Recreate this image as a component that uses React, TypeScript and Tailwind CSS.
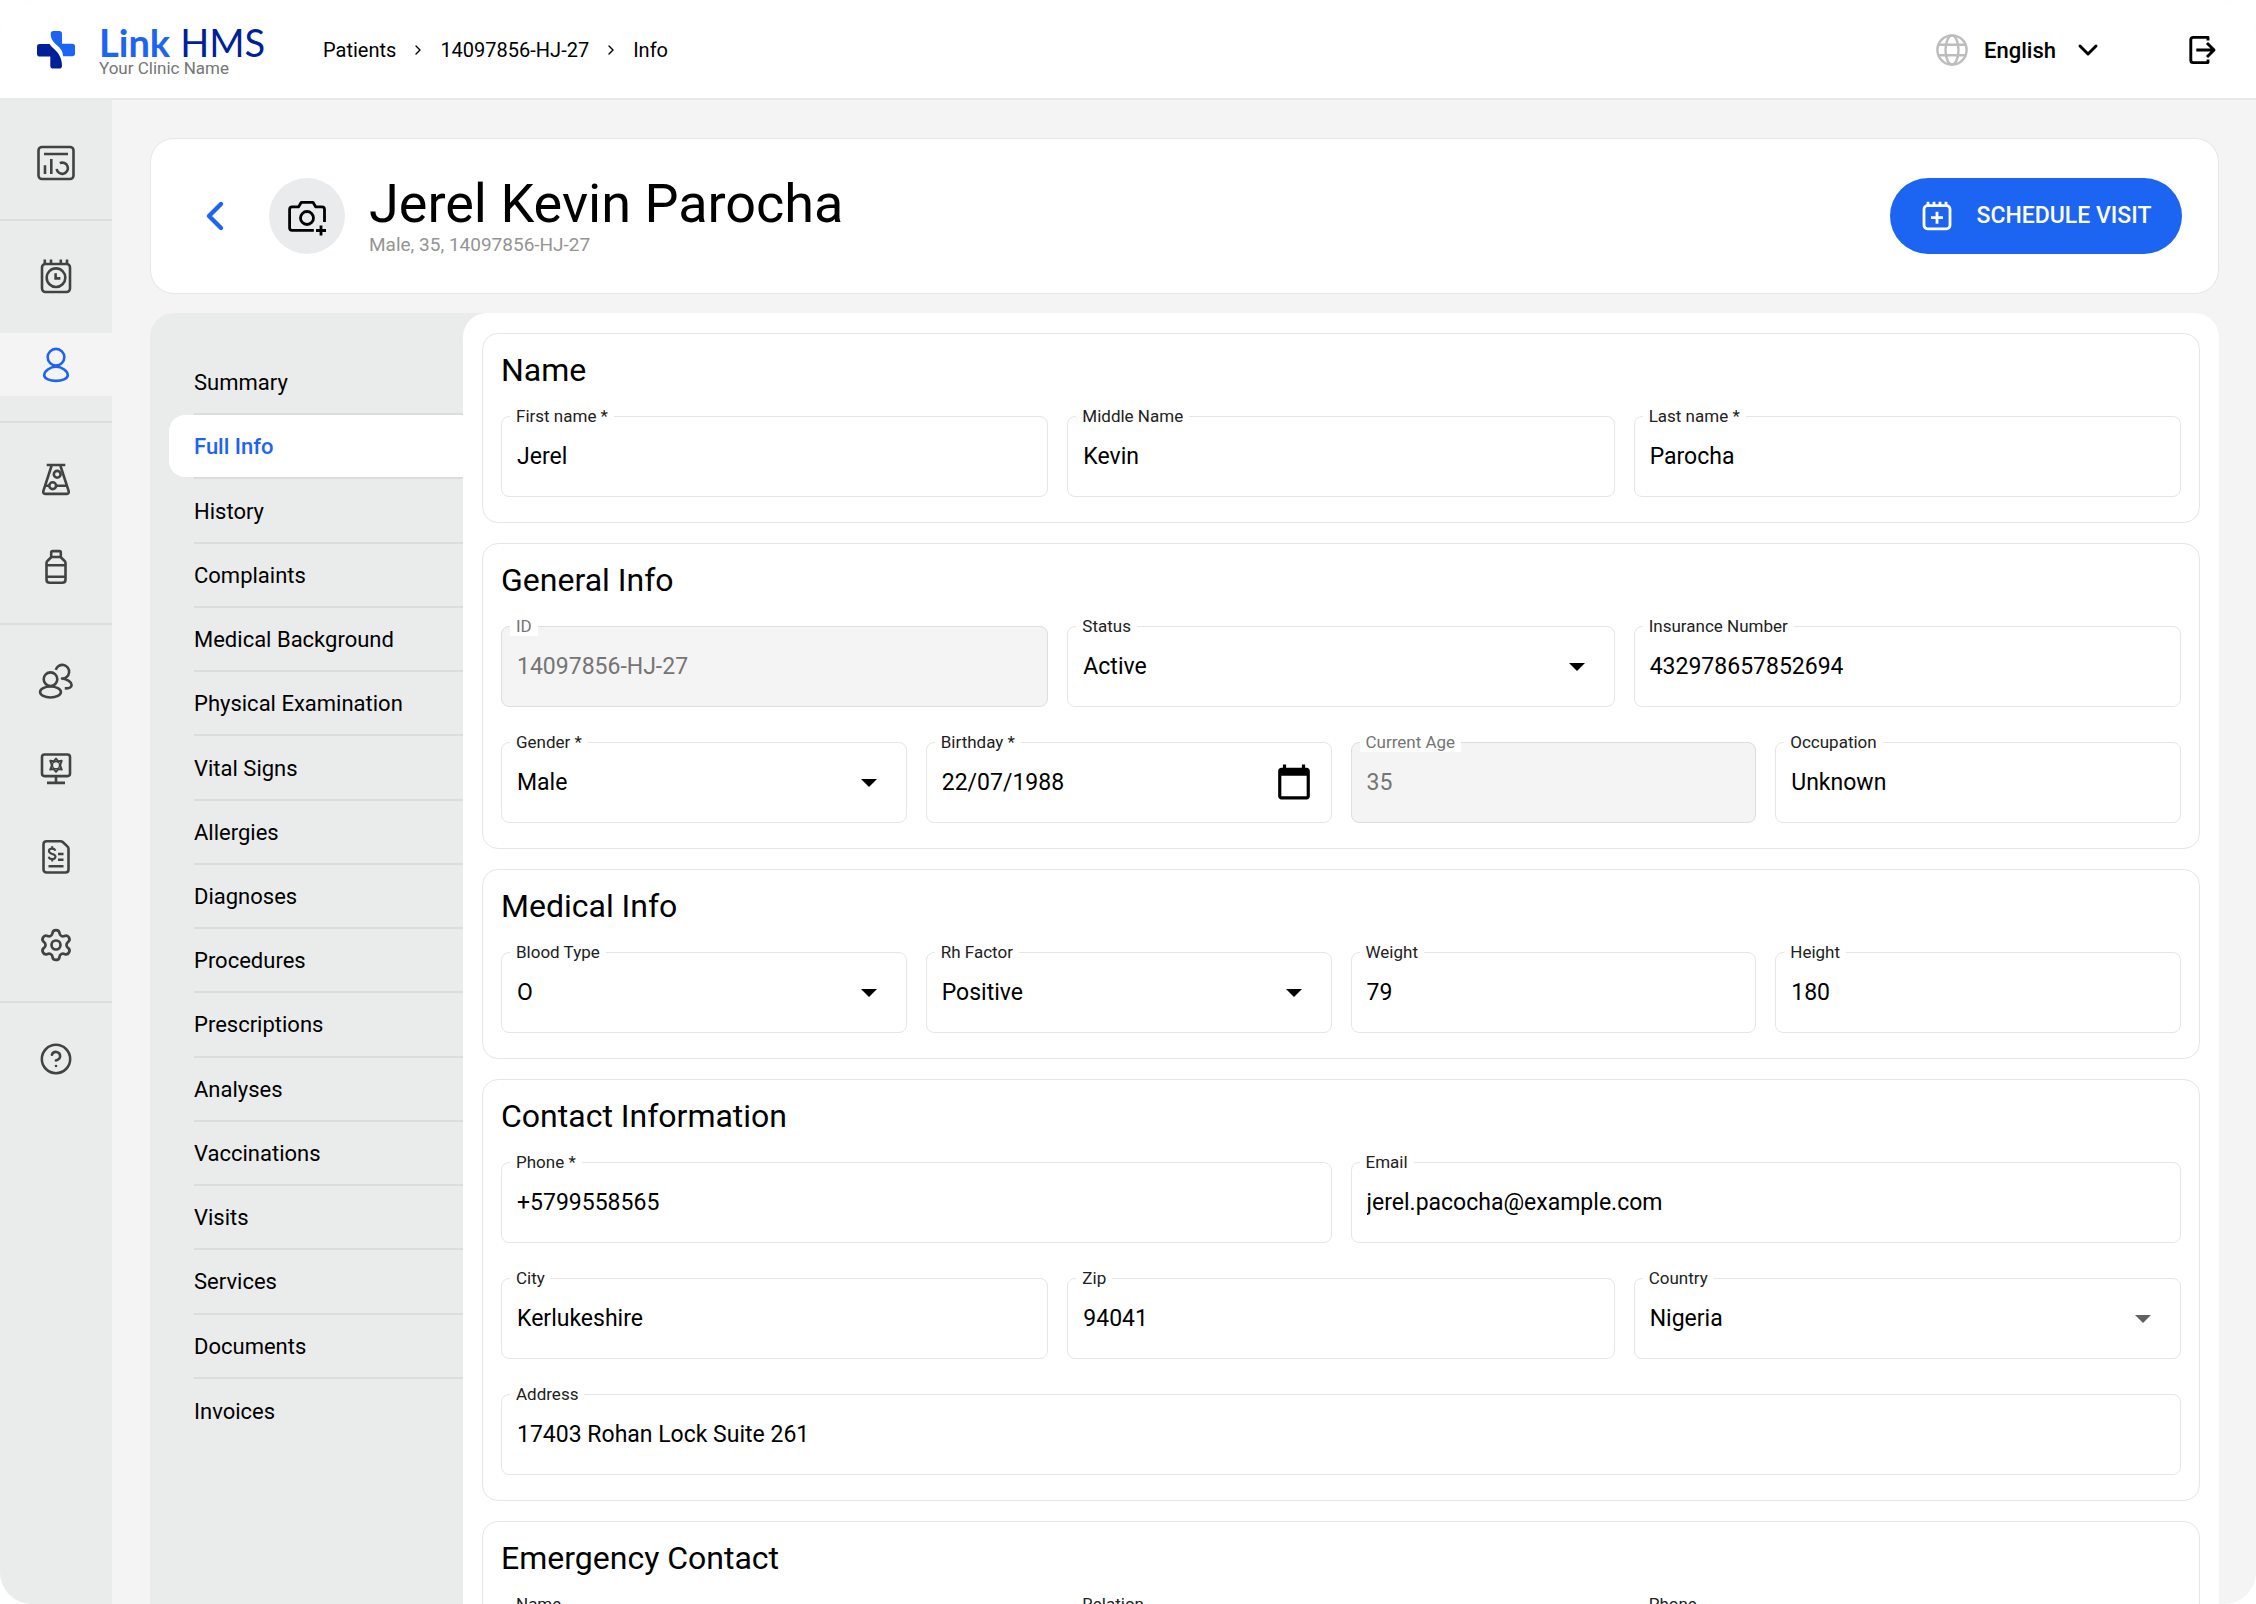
import React, { useId } from 'react';
import { ChevronDown, ChevronLeft, ChevronRight, CircleHelp, Settings } from 'lucide-react';
import { MdCalendarToday } from 'react-icons/md';

interface FieldConfig {
  label: string;
  value: string;
  type?: 'text' | 'select' | 'date';
  disabled?: boolean;
  muted?: boolean;
}

interface SectionConfig {
  title: string;
  rows: FieldConfig[][];
}

const sections: SectionConfig[] = [
  {
    title: 'Name',
    rows: [
      [
        { label: 'First name *', value: 'Jerel' },
        { label: 'Middle Name', value: 'Kevin' },
        { label: 'Last name *', value: 'Parocha' }
      ]
    ]
  },
  {
    title: 'General Info',
    rows: [
      [
        { label: 'ID', value: '14097856-HJ-27', disabled: true },
        { label: 'Status', value: 'Active', type: 'select' },
        { label: 'Insurance Number', value: '432978657852694' }
      ],
      [
        { label: 'Gender *', value: 'Male', type: 'select' },
        { label: 'Birthday *', value: '22/07/1988', type: 'date' },
        { label: 'Current Age', value: '35', disabled: true },
        { label: 'Occupation', value: 'Unknown' }
      ]
    ]
  },
  {
    title: 'Medical Info',
    rows: [
      [
        { label: 'Blood Type', value: 'O', type: 'select' },
        { label: 'Rh Factor', value: 'Positive', type: 'select' },
        { label: 'Weight', value: '79' },
        { label: 'Height', value: '180' }
      ]
    ]
  },
  {
    title: 'Contact Information',
    rows: [
      [
        { label: 'Phone *', value: '+5799558565' },
        { label: 'Email', value: 'jerel.pacocha@example.com' }
      ],
      [
        { label: 'City', value: 'Kerlukeshire' },
        { label: 'Zip', value: '94041' },
        { label: 'Country', value: 'Nigeria', type: 'select', muted: true }
      ],
      [{ label: 'Address', value: '17403 Rohan Lock Suite 261' }]
    ]
  },
  {
    title: 'Emergency Contact',
    rows: [
      [
        { label: 'Name', value: '' },
        { label: 'Relation', value: '' },
        { label: 'Phone', value: '' }
      ]
    ]
  }
];

const menuItems = [
  'Summary',
  'Full Info',
  'History',
  'Complaints',
  'Medical Background',
  'Physical Examination',
  'Vital Signs',
  'Allergies',
  'Diagnoses',
  'Procedures',
  'Prescriptions',
  'Analyses',
  'Vaccinations',
  'Visits',
  'Services',
  'Documents',
  'Invoices'
];

const rowColumns: Record<number, string> = {
  1: 'grid-cols-1',
  2: 'grid-cols-2',
  3: 'grid-cols-3',
  4: 'grid-cols-4'
};

function NavSvg({ children }: { children: React.ReactNode }) {
  return (
    <svg
      viewBox="0 0 40 40"
      className="w-10 h-10"
      fill="none"
      stroke="currentColor"
      strokeWidth="2.6"
      strokeLinejoin="round"
      aria-hidden="true"
    >
      {children}
    </svg>
  );
}

const DashboardIcon = () => (
  <NavSvg>
    <rect x="2.5" y="4" width="35" height="32" rx="3.5" />
    <path d="M8 11h24M9 22.3v8.6M15.3 16v14.9M23.8 20.2a5.6 5.6 0 1 1-3.1 5.6" />
  </NavSvg>
);

const AppointmentsIcon = () => (
  <NavSvg>
    <rect x="6" y="7" width="28" height="28" rx="3.5" />
    <path d="M8.8 2.5v4.5M15 2.5v4.5M24.8 2.5v4.5M31 2.5v4.5" />
    <circle cx="20" cy="20.7" r="9.3" />
    <path d="M19.6 16.2v5.2h4.8" strokeLinejoin="miter" />
  </NavSvg>
);

const PatientsIcon = () => (
  <NavSvg>
    <circle cx="20" cy="12.2" r="8.3" />
    <path d="M20 21.8C14 21.8 8.2 26.2 8.2 30.2c0 3.4 6 5.7 11.8 5.7s11.8-2.3 11.8-5.7c0-4-5.8-8.4-11.8-8.4z" />
  </NavSvg>
);

const LabIcon = () => (
  <NavSvg>
    <path d="M10.7 6h18.6M15.5 7 7.4 31.8c-.6 2 .3 3.1 1.7 3.1h21.8c1.4 0 2.3-1.1 1.7-3.1L24.5 7" />
    <path d="M9.5 26.7h3.9M20 26.7h10.5" />
    <circle cx="21.2" cy="15.3" r="3.4" />
    <circle cx="16.7" cy="26.7" r="3.4" />
  </NavSvg>
);

const MedicineIcon = () => (
  <NavSvg>
    <path d="M15.2 10V5.5c0-.9.5-1.4 1.4-1.4h6.8c.9 0 1.4.5 1.4 1.4V10z" />
    <path d="M15.2 10.3 11.6 13.7c-.7.6-1.1 1.4-1.1 2.3v16.5c0 2.1 1.2 3.3 3.3 3.3h12.4c2.1 0 3.3-1.2 3.3-3.3V16c0-.9-.4-1.7-1.1-2.3l-3.6-3.4" />
    <path d="M10.5 18.3h19M10.5 29.7h19" />
  </NavSvg>
);

const StaffIcon = () => (
  <NavSvg>
    <circle cx="14.5" cy="18.2" r="6.8" />
    <ellipse cx="14.5" cy="31" rx="10.4" ry="5.5" />
    <path d="M19.8 8.8a6.8 6.8 0 1 1 6.2 8.7c5.4.6 9.6 3.6 9.6 6.4 0 2.2-2.8 3.5-6.8 3.5" />
  </NavSvg>
);

const WorkstationIcon = () => (
  <NavSvg>
    <rect x="6" y="5.5" width="28" height="21.6" rx="2.5" />
    <path d="M20 27.5v6M11 33.9h18" />
    <path
      d="m20 9.6 2.2 2.7 3.5-.5-1.2 3.3c-.3.7-.3 1.5 0 2.2l1.2 3.3-3.5-.5-2.2 2.7-2.2-2.7-3.5.5 1.2-3.3c.3-.7.3-1.5 0-2.2l-1.2-3.3 3.5.5z"
      strokeWidth="2"
    />
    <circle cx="20" cy="16.2" r="3.6" strokeWidth="1.5" />
  </NavSvg>
);

const BillingIcon = () => (
  <NavSvg>
    <path d="M10.5 4.2H24.6c.8 0 1.5.3 2.1.8l4.7 4.4c.7.6 1.1 1.4 1.1 2.3V32.5c0 1.8-1.2 3-3 3h-19c-1.8 0-3-1.2-3-3V7.2c0-1.8 1.2-3 3-3z" />
    <path d="M22 17h5.5M22 22.8h5.5M12.5 29.3h15" />
    <path
      d="M19.3 13.8c-.4-1.5-1.6-2.2-3.2-2.2-1.9 0-3.2.9-3.2 2.5 0 3.8 6.6 1.8 6.6 5.4 0 1.7-1.4 2.6-3.3 2.6-1.8 0-3.1-.8-3.5-2.4M16.2 9.2v2.4M16.2 22v2.5"
      strokeWidth="2.1"
    />
  </NavSvg>
);

const navGroups = [
  [{ name: 'Dashboard', icon: <DashboardIcon /> }],
  [
    { name: 'Appointments', icon: <AppointmentsIcon /> },
    { name: 'Patients', icon: <PatientsIcon />, active: true }
  ],
  [
    { name: 'Laboratory', icon: <LabIcon /> },
    { name: 'Medicines', icon: <MedicineIcon /> }
  ],
  [
    { name: 'Staff', icon: <StaffIcon /> },
    { name: 'Workstations', icon: <WorkstationIcon /> },
    { name: 'Billing', icon: <BillingIcon /> },
    { name: 'Settings', icon: <Settings className="w-9 h-9" strokeWidth={1.8} /> }
  ],
  [{ name: 'Help', icon: <CircleHelp className="w-[34px] h-[34px]" strokeWidth={1.8} /> }]
];

function Logo() {
  return (
    <a href="#home" className="flex items-center gap-6">
      <svg viewBox="0 0 38 38" className="w-[38px] h-[38px]" aria-hidden="true">
        <path
          fill="#1c64f2"
          d="M16.5 0h5.7Q25 0 25 2.8v9.9h10.2q2.8 0 2.8 2.8v7q0 2.8-2.8 2.8H26.2C25.6 18.5 22.5 16.4 18 12.4c-3-2.7-4.3-5.4-4.3-9.6Q13.7 0 16.5 0z"
        />
        <path
          fill="#001f99"
          d="M2.8 13h9.8c1.4 3 5 4.6 8.3 9 2.8 3.7 4.1 8 4.1 12.7q0 2.8-2.8 2.8h-6.1q-2.8 0-2.8-2.8V25.5H2.8Q0 25.5 0 22.7v-6.9Q0 13 2.8 13z"
        />
      </svg>
      <span className="flex flex-col">
        <span className="flex gap-[10px] font-[Lato,sans-serif] text-[38px] leading-9 text-[#001f99]">
          <span className="font-bold text-[#1c64f2]">Link</span>
          <span>HMS</span>
        </span>
        <span className="text-[17px] leading-4 text-[#757575]">Your Clinic Name</span>
      </span>
    </a>
  );
}

function TopBar() {
  return (
    <header className="flex items-center h-[100px] shrink-0 bg-white border-b-2 border-[#e9e9e9] pt-[2px] pl-[37px] pr-[38px]">
      <Logo />
      <nav aria-label="Breadcrumb" className="flex items-center gap-[14px] ml-[58px] text-xl">
        <a href="#patients">Patients</a>
        <ChevronRight className="w-4 h-4" />
        <a href="#patient">14097856-HJ-27</a>
        <ChevronRight className="w-4 h-4" />
        <a href="#info">Info</a>
      </nav>
      <div className="flex items-center gap-[82px] ml-auto">
        <button type="button" className="flex items-center gap-4 text-[22px] font-medium">
          <svg
            viewBox="0 0 32 32"
            className="w-8 h-8 text-[#bdbdbd]"
            fill="none"
            stroke="currentColor"
            strokeWidth="2.4"
            aria-hidden="true"
          >
            <circle cx="16" cy="16" r="14.6" />
            <ellipse cx="16" cy="16" rx="6.5" ry="14.6" />
            <path d="M2.3 10.8h27.4M2.3 21.2h27.4" />
          </svg>
          English
          <ChevronDown className="w-8 h-8" strokeWidth={2.2} />
        </button>
        <button type="button" aria-label="Log out">
          <svg
            viewBox="0 0 32 32"
            className="w-8 h-8"
            fill="none"
            stroke="currentColor"
            strokeWidth="2.9"
            strokeLinejoin="round"
            aria-hidden="true"
          >
            <path d="M22 6.5V3.4H7.2c-1.4 0-2.4 1-2.4 2.4v20.4c0 1.4 1 2.4 2.4 2.4H22V25.5" />
            <path d="M10.3 16h17M21 9l7 7-7 7" />
          </svg>
        </button>
      </div>
    </header>
  );
}

function NavRail() {
  return (
    <nav aria-label="Main" className="w-28 shrink-0 bg-[#eaeceb] pt-[7px] text-[#424242]">
      {navGroups.map((group, index) => (
        <ul
          key={index}
          className="flex flex-col gap-[25px] pt-6 pb-[25px] border-b-2 border-[#dcdddd] last:border-b-0"
        >
          {group.map((item) => (
            <li key={item.name}>
              <a
                href={`#${item.name.toLowerCase()}`}
                aria-label={item.name}
                className={`flex items-center justify-center h-[63px] ${
                  'active' in item && item.active ? 'bg-[#f4f4f4] text-[#1c64f2]' : ''
                }`}
              >
                {item.icon}
              </a>
            </li>
          ))}
        </ul>
      ))}
    </nav>
  );
}

function PatientHeader() {
  return (
    <section className="flex items-center bg-white border border-[#e6e6e6] rounded-3xl h-[156px] pl-10 pr-9">
      <button type="button" aria-label="Back" className="text-[#1c64f2]">
        <ChevronLeft className="w-12 h-12" strokeWidth={2.2} />
      </button>
      <button
        type="button"
        aria-label="Add photo"
        className="flex items-center justify-center w-[76px] h-[76px] ml-[30px] rounded-full bg-[#e9ebed]"
      >
        <svg
          viewBox="0 0 48 48"
          className="w-12 h-12"
          fill="none"
          stroke="currentColor"
          strokeWidth="2.8"
          strokeLinejoin="round"
          aria-hidden="true"
        >
          <path d="M41.5 30V17.5c0-1.6-1-2.6-2.6-2.6h-6.1L30 10.3H18.3l-2.8 4.6H9.2c-1.6 0-2.6 1-2.6 2.6v18.3c0 1.6 1 2.6 2.6 2.6h21.6" />
          <circle cx="24" cy="26" r="6.5" />
          <path d="M38 33.5v10M33 38.5h10" />
        </svg>
      </button>
      <div className="ml-6 pt-[2px]">
        <h1 className="text-[54px] leading-[56px]">Jerel Kevin Parocha</h1>
        <p className="text-[19px] leading-[26px] text-[#949494]">Male, 35, 14097856-HJ-27</p>
      </div>
      <button
        type="button"
        className="flex items-center justify-center gap-6 w-[292px] h-[76px] ml-auto rounded-full bg-[#1c64f2] text-[23px] font-medium text-white"
      >
        <svg
          viewBox="0 0 32 32"
          className="w-8 h-8"
          fill="none"
          stroke="currentColor"
          strokeWidth="2.8"
          aria-hidden="true"
        >
          <rect x="3" y="5.6" width="26" height="23.2" rx="3.5" />
          <path d="M7 1.8v4M13 1.8v4M19 1.8v4M25 1.8v4M16 11.7v12M10 17.7h12" />
        </svg>
        SCHEDULE VISIT
      </button>
    </section>
  );
}

function SideMenu() {
  return (
    <nav aria-label="Patient sections" className="w-[313px] shrink-0 pt-[38px]">
      <ul className="grid auto-rows-fr h-[1092px]">
        {menuItems.map((item) => {
          const active = item === 'Full Info';
          return (
            <li key={item} className="group flex flex-col pl-[19px]">
              <a
                href={`#${item.toLowerCase().replace(/ /g, '-')}`}
                className={`flex flex-1 items-center pt-px pl-[25px] text-[22px] ${
                  active ? 'rounded-l-2xl bg-white font-medium text-[#1c64f2]' : ''
                }`}
              >
                {item}
              </a>
              <span className="h-[2px] ml-[25px] bg-[#dbdddd] group-last:hidden" />
            </li>
          );
        })}
      </ul>
    </nav>
  );
}

function Field({ label, value, type = 'text', disabled = false, muted = false }: FieldConfig) {
  const id = useId();
  const control = `w-full h-[81px] rounded-lg border pl-[15px] text-[23px] outline-none ${
    disabled ? 'border-[#dedede] bg-[#f4f4f4] text-[#757575]' : 'border-[#e6e6e6] bg-white'
  }`;

  return (
    <div className="relative">
      <label
        htmlFor={id}
        className={`absolute -top-[10px] left-[9px] z-10 px-[6px] bg-white text-[17px] leading-5 ${
          disabled ? 'text-[#757575]' : 'text-[#212121]'
        }`}
      >
        {label}
      </label>
      {type === 'select' ? (
        <>
          <select id={id} defaultValue={value} className={`${control} appearance-none pt-px pr-16`}>
            <option value={value}>{value}</option>
          </select>
          <svg
            viewBox="0 0 16 8"
            className={`absolute right-[30px] top-[37px] w-4 h-2 pointer-events-none ${
              muted ? 'text-[#616161]' : 'text-black'
            }`}
            aria-hidden="true"
          >
            <path d="M0 0h16L8 8z" fill="currentColor" />
          </svg>
        </>
      ) : (
        <input id={id} type="text" defaultValue={value} disabled={disabled} className={control} />
      )}
      {type === 'date' && (
        <button type="button" aria-label="Choose date" className="absolute right-[19px] top-[21px]">
          <MdCalendarToday className="w-[38px] h-[38px]" />
        </button>
      )}
    </div>
  );
}

function Section({ title, rows }: SectionConfig) {
  return (
    <section className="border border-[#e6e6e6] rounded-2xl px-[18px] pt-4 pb-[25px]">
      <h2 className="text-[32px] leading-10 mb-[26px]">{title}</h2>
      <div className="space-y-[35px]">
        {rows.map((row, index) => (
          <div key={index} className={`grid gap-x-[19px] ${rowColumns[row.length]}`}>
            {row.map((field) => (
              <Field key={field.label} {...field} />
            ))}
          </div>
        ))}
      </div>
    </section>
  );
}

export default function App() {
  return (
    <div className="flex flex-col h-screen overflow-hidden rounded-[32px] bg-[#f4f4f4] font-[Roboto,sans-serif] text-black">
      <TopBar />
      <div className="flex flex-1 min-h-0">
        <NavRail />
        <main className="flex-1 min-w-0 overflow-y-auto [scrollbar-width:none] pl-[38px] pr-[37px] pt-[38px]">
          <PatientHeader />
          <div className="flex mt-[19px] rounded-t-3xl bg-[#eaeceb]">
            <SideMenu />
            <div className="flex-1 min-w-0 space-y-5 rounded-t-3xl bg-white px-[19px] py-5">
              {sections.map((section) => (
                <Section key={section.title} {...section} />
              ))}
            </div>
          </div>
        </main>
      </div>
    </div>
  );
}
